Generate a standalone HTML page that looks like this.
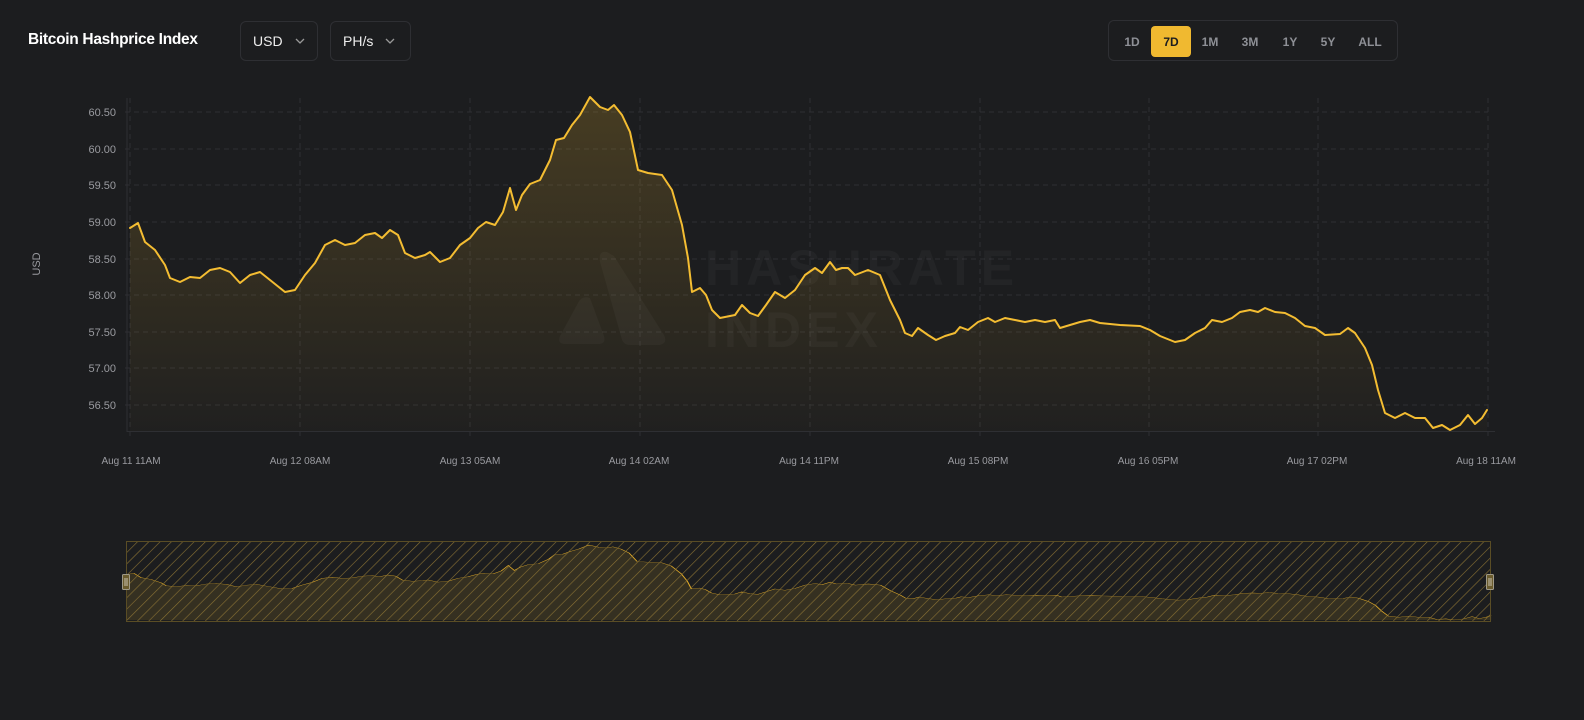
<!DOCTYPE html>
<html><head><meta charset="utf-8"><style>
*{margin:0;padding:0;box-sizing:border-box}
body{width:1584px;height:720px;background:#1c1d1f;font-family:"Liberation Sans",sans-serif;position:relative;overflow:hidden;color:#fff}
.title{position:absolute;left:28px;top:31px;font-size:15.5px;font-weight:bold;letter-spacing:-0.3px}
.sel{position:absolute;top:21px;height:40px;border:1px solid #2e2f33;border-radius:6px;font-size:14px;display:flex;align-items:center;padding-left:12px;color:#eee}
.sel svg{margin-left:12px}
.grp{position:absolute;left:1108px;top:20px;width:290px;height:41px;border:1px solid #2e2f33;border-radius:6px}
.b{position:absolute;top:5px;height:31px;font-size:12px;font-weight:bold;color:#8e9096;display:flex;align-items:center;justify-content:center;border-radius:4px}
svg.main{position:absolute;left:0;top:0}
</style></head><body>
<div class="title">Bitcoin Hashprice Index</div>
<div class="sel" style="left:240px;width:78px">USD<svg width="10" height="6" viewBox="0 0 10 6"><path d="M1 1L5 5L9 1" stroke="#999" stroke-width="1.3" fill="none"/></svg></div>
<div class="sel" style="left:330px;width:81px">PH/s<svg width="10" height="6" viewBox="0 0 10 6"><path d="M1 1L5 5L9 1" stroke="#999" stroke-width="1.3" fill="none"/></svg></div>
<div class="grp">
<div class="b" style="left:8px;width:30px">1D</div>
<div class="b" style="left:42px;width:40px;background:#f0b930;color:#1c1d1f">7D</div>
<div class="b" style="left:84px;width:34px">1M</div>
<div class="b" style="left:124px;width:34px">3M</div>
<div class="b" style="left:164px;width:34px">1Y</div>
<div class="b" style="left:202px;width:34px">5Y</div>
<div class="b" style="left:242px;width:38px">ALL</div>
</div>
<svg class="main" width="1584" height="720" viewBox="0 0 1584 720">
<defs>
<linearGradient id="g" x1="0" y1="0" x2="0" y2="1"><stop offset="0" stop-color="#f2ba30" stop-opacity="0.2"/><stop offset="1" stop-color="#f2ba30" stop-opacity="0.02"/></linearGradient>
<pattern id="h" width="8" height="8" patternUnits="userSpaceOnUse" patternTransform="rotate(45)"><line x1="0" y1="0" x2="0" y2="8" stroke="#8a7233" stroke-width="1.2"/></pattern>
<path id="ln" d="M130,228 L138,223 L145,242 L155,250 L165,265 L170,278 L180,282 L190,277 L200,278 L210,270 L220,268 L230,272 L240,283 L250,275 L260,272 L270,280 L285,292 L295,290 L305,275 L315,263 L325,245 L335,240 L345,245 L355,243 L365,235 L375,233 L382,238 L390,230 L398,235 L405,253 L415,258 L425,255 L430,252 L440,262 L450,258 L460,245 L470,238 L478,228 L486,222 L495,225 L503,212 L510,188 L516,210 L522,195 L530,184 L540,180 L550,160 L556,140 L564,138 L572,125 L580,115 L590,97 L600,107 L608,110 L614,105 L622,115 L630,132 L638,170 L648,173 L662,175 L672,190 L682,225 L688,258 L692,292 L700,288 L706,295 L712,310 L720,318 L735,315 L742,305 L750,313 L758,316 L766,305 L775,292 L785,298 L795,290 L805,275 L815,268 L822,273 L830,262 L836,270 L842,268 L848,268 L855,275 L868,270 L880,275 L890,300 L900,320 L905,333 L912,336 L918,328 L928,335 L936,340 L945,336 L955,333 L960,327 L968,330 L978,322 L988,318 L995,322 L1005,318 L1015,320 L1025,322 L1035,320 L1045,322 L1055,320 L1060,328 L1070,325 L1080,322 L1090,320 L1100,323 L1110,324 L1120,325 L1140,326 L1150,330 L1160,336 L1175,342 L1185,340 L1195,333 L1205,328 L1212,320 L1222,322 L1232,318 L1240,312 L1250,310 L1258,312 L1265,308 L1275,312 L1285,313 L1295,318 L1305,326 L1315,328 L1325,335 L1340,334 L1348,328 L1355,333 L1365,348 L1372,365 L1378,390 L1385,413 L1395,418 L1405,413 L1415,418 L1425,418 L1433,428 L1442,425 L1450,430 L1460,425 L1468,415 L1475,424 L1482,418 L1487,410"/>
</defs>
<g stroke="#2e2f33" stroke-width="1" stroke-dasharray="5,4">
<line x1="125" y1="112" x2="1488" y2="112"/><line x1="125" y1="149" x2="1488" y2="149"/><line x1="125" y1="185" x2="1488" y2="185"/><line x1="125" y1="222" x2="1488" y2="222"/><line x1="125" y1="259" x2="1488" y2="259"/><line x1="125" y1="295" x2="1488" y2="295"/><line x1="125" y1="332" x2="1488" y2="332"/><line x1="125" y1="368" x2="1488" y2="368"/><line x1="125" y1="405" x2="1488" y2="405"/>
<line x1="130" y1="98" x2="130" y2="440"/><line x1="300" y1="98" x2="300" y2="440"/><line x1="470" y1="98" x2="470" y2="440"/><line x1="640" y1="98" x2="640" y2="440"/><line x1="810" y1="98" x2="810" y2="440"/><line x1="980" y1="98" x2="980" y2="440"/><line x1="1149" y1="98" x2="1149" y2="440"/><line x1="1318" y1="98" x2="1318" y2="440"/><line x1="1488" y1="98" x2="1488" y2="440"/>
</g>
<line x1="127" y1="98" x2="127" y2="432" stroke="#2e2f33"/>
<line x1="127" y1="431.5" x2="1495" y2="431.5" stroke="#2e2f33"/>
<g fill="#ffffff" fill-opacity="0.03">
<path d="M607,252 Q598,250 600,262 L622,340 Q624,345 630,345 L660,345 Q668,343 664,335 L614,256 Z"/>
<path d="M590,298 Q582,295 578,303 L560,336 Q557,344 565,344 L600,344 Q606,343 604,336 Z"/>
<text x="705" y="285" font-size="50" font-weight="bold" letter-spacing="5">HASHRATE</text>
<text x="705" y="347" font-size="50" font-weight="bold" letter-spacing="5">INDEX</text>
</g>
<path d="M130,228 L138,223 L145,242 L155,250 L165,265 L170,278 L180,282 L190,277 L200,278 L210,270 L220,268 L230,272 L240,283 L250,275 L260,272 L270,280 L285,292 L295,290 L305,275 L315,263 L325,245 L335,240 L345,245 L355,243 L365,235 L375,233 L382,238 L390,230 L398,235 L405,253 L415,258 L425,255 L430,252 L440,262 L450,258 L460,245 L470,238 L478,228 L486,222 L495,225 L503,212 L510,188 L516,210 L522,195 L530,184 L540,180 L550,160 L556,140 L564,138 L572,125 L580,115 L590,97 L600,107 L608,110 L614,105 L622,115 L630,132 L638,170 L648,173 L662,175 L672,190 L682,225 L688,258 L692,292 L700,288 L706,295 L712,310 L720,318 L735,315 L742,305 L750,313 L758,316 L766,305 L775,292 L785,298 L795,290 L805,275 L815,268 L822,273 L830,262 L836,270 L842,268 L848,268 L855,275 L868,270 L880,275 L890,300 L900,320 L905,333 L912,336 L918,328 L928,335 L936,340 L945,336 L955,333 L960,327 L968,330 L978,322 L988,318 L995,322 L1005,318 L1015,320 L1025,322 L1035,320 L1045,322 L1055,320 L1060,328 L1070,325 L1080,322 L1090,320 L1100,323 L1110,324 L1120,325 L1140,326 L1150,330 L1160,336 L1175,342 L1185,340 L1195,333 L1205,328 L1212,320 L1222,322 L1232,318 L1240,312 L1250,310 L1258,312 L1265,308 L1275,312 L1285,313 L1295,318 L1305,326 L1315,328 L1325,335 L1340,334 L1348,328 L1355,333 L1365,348 L1372,365 L1378,390 L1385,413 L1395,418 L1405,413 L1415,418 L1425,418 L1433,428 L1442,425 L1450,430 L1460,425 L1468,415 L1475,424 L1482,418 L1487,410 L1487,431 L130,431 Z" fill="url(#g)"/>
<use href="#ln" fill="none" stroke="#f4bd32" stroke-width="2" stroke-linejoin="round" stroke-linecap="round"/>
<g fill="#9a9ba0" font-size="11" text-anchor="end">
<text x="116" y="116">60.50</text><text x="116" y="153">60.00</text><text x="116" y="189">59.50</text><text x="116" y="226">59.00</text><text x="116" y="263">58.50</text><text x="116" y="299">58.00</text><text x="116" y="336">57.50</text><text x="116" y="372">57.00</text><text x="116" y="409">56.50</text>
</g>
<text x="40" y="264" fill="#9a9ba0" font-size="11" text-anchor="middle" transform="rotate(-90 40 264)">USD</text>
<g fill="#9a9ba0" font-size="10" text-anchor="middle">
<text x="131" y="464">Aug 11 11AM</text><text x="300" y="464">Aug 12 08AM</text><text x="470" y="464">Aug 13 05AM</text><text x="639" y="464">Aug 14 02AM</text><text x="809" y="464">Aug 14 11PM</text><text x="978" y="464">Aug 15 08PM</text><text x="1148" y="464">Aug 16 05PM</text><text x="1317" y="464">Aug 17 02PM</text><text x="1486" y="464">Aug 18 11AM</text>
</g>
<g transform="matrix(1.006,0,0,0.225,-4.78,523.2)">
<path d="M130,228 L138,223 L145,242 L155,250 L165,265 L170,278 L180,282 L190,277 L200,278 L210,270 L220,268 L230,272 L240,283 L250,275 L260,272 L270,280 L285,292 L295,290 L305,275 L315,263 L325,245 L335,240 L345,245 L355,243 L365,235 L375,233 L382,238 L390,230 L398,235 L405,253 L415,258 L425,255 L430,252 L440,262 L450,258 L460,245 L470,238 L478,228 L486,222 L495,225 L503,212 L510,188 L516,210 L522,195 L530,184 L540,180 L550,160 L556,140 L564,138 L572,125 L580,115 L590,97 L600,107 L608,110 L614,105 L622,115 L630,132 L638,170 L648,173 L662,175 L672,190 L682,225 L688,258 L692,292 L700,288 L706,295 L712,310 L720,318 L735,315 L742,305 L750,313 L758,316 L766,305 L775,292 L785,298 L795,290 L805,275 L815,268 L822,273 L830,262 L836,270 L842,268 L848,268 L855,275 L868,270 L880,275 L890,300 L900,320 L905,333 L912,336 L918,328 L928,335 L936,340 L945,336 L955,333 L960,327 L968,330 L978,322 L988,318 L995,322 L1005,318 L1015,320 L1025,322 L1035,320 L1045,322 L1055,320 L1060,328 L1070,325 L1080,322 L1090,320 L1100,323 L1110,324 L1120,325 L1140,326 L1150,330 L1160,336 L1175,342 L1185,340 L1195,333 L1205,328 L1212,320 L1222,322 L1232,318 L1240,312 L1250,310 L1258,312 L1265,308 L1275,312 L1285,313 L1295,318 L1305,326 L1315,328 L1325,335 L1340,334 L1348,328 L1355,333 L1365,348 L1372,365 L1378,390 L1385,413 L1395,418 L1405,413 L1415,418 L1425,418 L1433,428 L1442,425 L1450,430 L1460,425 L1468,415 L1475,424 L1482,418 L1487,410 L1487,430 L130,430 Z" fill="#f2ba30" fill-opacity="0.12"/>
<use href="#ln" fill="none" stroke="#e0aa28" stroke-width="1.2" vector-effect="non-scaling-stroke"/>
</g>
<rect x="126.5" y="541.5" width="1364" height="80" fill="url(#h)" stroke="#5a4d25" stroke-width="1"/>
<g fill="#6b5c2e" stroke="#a09a88" stroke-width="1">
<rect x="122.5" y="574.5" width="7" height="15" rx="1"/>
<rect x="1486.5" y="574.5" width="7" height="15" rx="1"/>
</g>
<g stroke="#c8c2b0" stroke-width="1"><line x1="125" y1="578" x2="125" y2="586"/><line x1="127" y1="578" x2="127" y2="586"/><line x1="1489" y1="578" x2="1489" y2="586"/><line x1="1491" y1="578" x2="1491" y2="586"/></g>
</svg>
</body></html>
